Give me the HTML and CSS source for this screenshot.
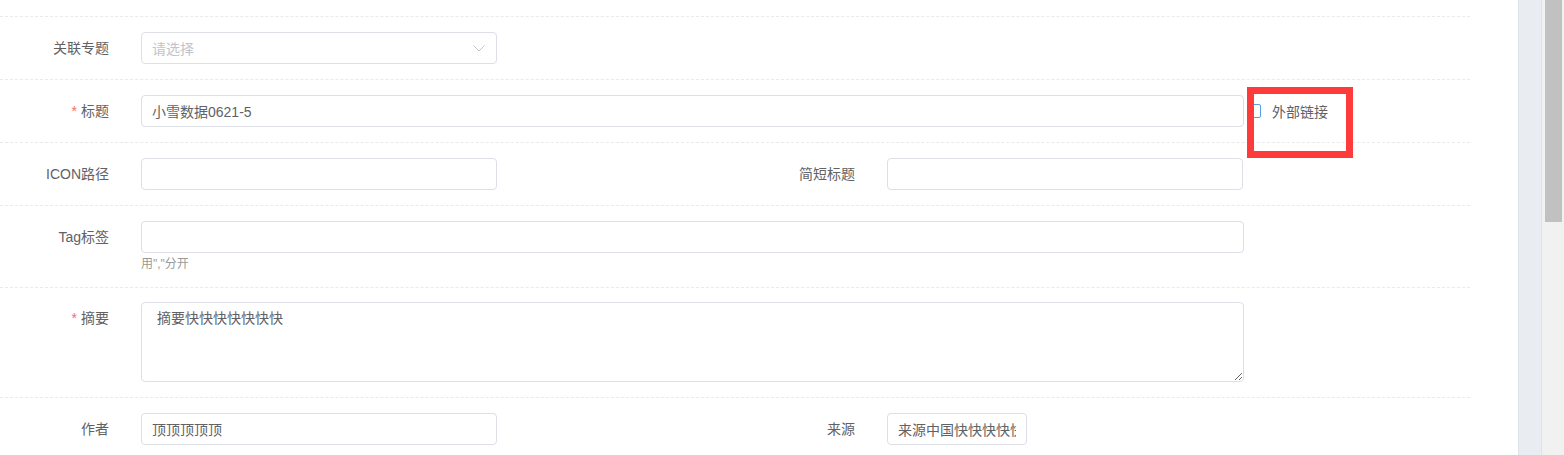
FILE: index.html
```html
<!DOCTYPE html>
<html lang="zh-CN">
<head>
    <meta charset="UTF-8">
    <title>编辑文章</title>
<link rel="stylesheet" href="styles.css">
</head>
<body>
    <div class="page">
        <div class="main">
            <div class="form">
                <div class="row row-top"></div>

                <!-- 关联专题 -->
                <div class="row">
                    <div class="half">
                        <label class="label">关联专题</label>
                        <div class="select">
                            <span class="placeholder">请选择</span>
                            <svg class="arrow" width="12" height="7" viewBox="0 0 12 7"><path d="M0.5 0.5 L6 6 L11.5 0.5" fill="none" stroke="#c0c4cc" stroke-width="1"/></svg>
                        </div>
                    </div>
                </div>

                <!-- 标题 -->
                <div class="row">
                    <label class="label"><span class="req">*</span>标题</label>
                    <input class="input wide" type="text" value="小雪数据0621-5">
                    <div class="check">
                        <span class="box"></span>
                        <span class="check-text">外部链接</span>
                        <div class="mark"></div>
                    </div>
                </div>

                <!-- ICON路径 / 简短标题 -->
                <div class="row">
                    <div class="half">
                        <label class="label">ICON路径</label>
                        <input class="input" type="text" value="">
                    </div>
                    <div class="half">
                        <label class="label">简短标题</label>
                        <input class="input" type="text" value="">
                    </div>
                </div>

                <!-- Tag -->
                <div class="row row-tag">
                    <label class="label">Tag标签</label>
                    <div class="field">
                        <input class="input wide" type="text" value="">
                        <div class="hint">用","分开</div>
                    </div>
                </div>

                <!-- 摘要 -->
                <div class="row row-area">
                    <label class="label"><span class="req">*</span>摘要</label>
                    <textarea class="textarea">摘要快快快快快快快</textarea>
                </div>

                <!-- 作者 / 来源 -->
                <div class="row">
                    <div class="half">
                        <label class="label">作者</label>
                        <input class="input" type="text" value="顶顶顶顶顶">
                    </div>
                    <div class="half">
                        <label class="label">来源</label>
                        <input class="input short" type="text" value="来源中国快快快快快">
                    </div>
                </div>
            </div>
        </div>
        <div class="side"></div>
        <div class="scrollbar"><div class="thumb"></div></div>
    </div>
</body>
</html>
```

FILE: styles.css
```css
*{
    margin: 0;
    padding: 0;
    box-sizing: border-box;
}
body{
    background-color: #fff;
    font-family: "Liberation Sans", "Noto Sans CJK SC", sans-serif;
    font-size: 14px;
    color: #606266;
    overflow: hidden;
}
.page{
    display: flex;
    height: 455px;
}
.main{
    width: 1518px;
    flex-shrink: 0;
    background-color: #fff;
}
.side{
    width: 24px;
    flex-shrink: 0;
    background-color: #e9edf2;
    border-left: 1px solid #dde3ea;
    border-right: 1px solid #dfe2e6;
}
.scrollbar{
    width: 22px;
    flex-shrink: 0;
    background-color: #f1f1f1;
    padding: 0 2px 0 3px;
}
.scrollbar .thumb{
    height: 222px;
    background-color: #c1c1c1;
}

/* form rows */
.form{
    width: 1470px;
}
.row{
    display: flex;
    align-items: flex-start;
    padding: 15px 0;
    border-bottom: 1px dashed #e8eaee;
}
.row-top{
    height: 17px;
    padding: 0;
}
.row-tag{
    padding-bottom: 14px;
}
.row-area{
    padding-top: 14px;
}
.half{
    display: flex;
    width: 746px;
    flex-shrink: 0;
}
.half + .half{
    width: 724px;
}
.label{
    width: 141px;
    flex-shrink: 0;
    padding-right: 32px;
    text-align: right;
    line-height: 32px;
    color: #606266;
}
.req{
    color: #f56c6c;
    margin-right: 4px;
}

.input{
    width: 356px;
    height: 32px;
    padding: 0 10px;
    border: 1px solid #dcdfe6;
    border-radius: 4px;
    font-family: inherit;
    font-size: 14px;
    color: #606266;
    outline: none;
    background-color: #fff;
}
.input.wide{
    width: 1103px;
}
.input.short{
    width: 140px;
}
.field{
    display: flex;
    flex-direction: column;
}
.hint{
    padding-top: 2px;
    font-size: 12px;
    line-height: 18px;
    color: #999;
}

.select{
    width: 356px;
    height: 32px;
    padding: 0 11px 0 10px;
    border: 1px solid #dcdfe6;
    border-radius: 4px;
    display: flex;
    align-items: center;
    justify-content: space-between;
}
.select .placeholder{
    color: #c0c4cc;
}

.textarea{
    width: 1103px;
    height: 80px;
    padding: 5px 15px;
    border: 1px solid #dcdfe6;
    border-radius: 4px;
    font-family: inherit;
    font-size: 14px;
    line-height: 1.5;
    color: #606266;
    resize: vertical;
    outline: none;
}

/* 外部链接 checkbox */
.check{
    position: relative;
    display: flex;
    align-items: center;
    height: 32px;
    margin-left: 3px;
}
.check .box{
    width: 14px;
    height: 14px;
    border: 1px solid #5a9fe6;
    border-radius: 2px;
    background-color: #fff;
}
.check-text{
    margin-left: 11px;
    color: #606266;
}
.check .mark{
    position: absolute;
    left: 0;
    top: -8px;
    width: 106px;
    height: 71px;
    border: 7px solid #fe3b3b;
}
```
